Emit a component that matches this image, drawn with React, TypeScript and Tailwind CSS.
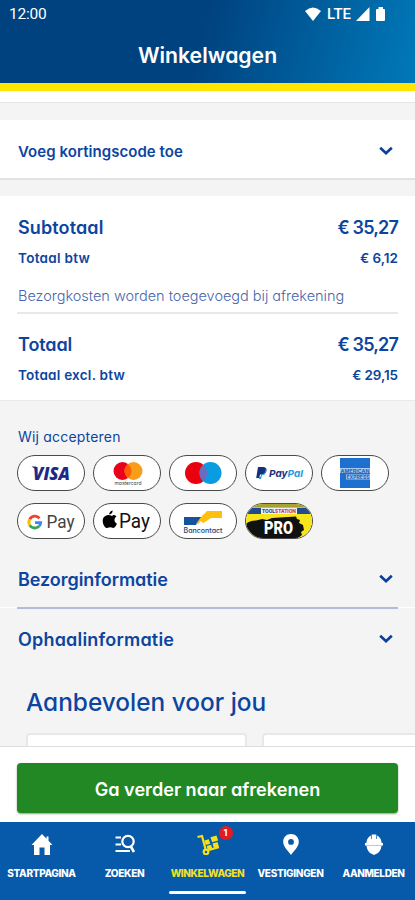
import React from "react";
import clsx from "clsx";

function Chevron() {
  return (
    <svg width="14" height="10" viewBox="0 0 14 10" fill="none" className="mr-[5px]">
      <path d="M1.200 1.800 L7 7.200 L12.800 1.800" stroke="#0a3f9c" strokeWidth="2.700" />
    </svg>
  );
}

// Rounded outline shared by all payment methods
function Pill({ children }: { children: React.ReactNode }) {
  return (
    <div className="h-9 w-[68px] overflow-hidden rounded-full border border-[#4a4a4a] bg-white">
      <svg width="66" height="34" viewBox="0 0 66 34">
        {children}
      </svg>
    </div>
  );
}

function Payments() {
  return (
    <div className="mt-[8px] grid grid-cols-[repeat(5,68px)] gap-x-2 gap-y-3">
      <Pill>
        <path d="M13.500 10.500h4.500l1.500 4z" fill="#1c2a66" />
        <text x="15" y="23.500" fontSize="18" fontWeight="800" fontStyle="italic" fontFamily="Open Sans" textLength="37" lengthAdjust="spacingAndGlyphs" fill="#1c2a86">VISA</text>
      </Pill>
      <Pill>
        <circle cx="28.500" cy="15" r="9" fill="#eb001b" />
        <circle cx="39.500" cy="15" r="9" fill="#f79e1b" />
        <path d="M34 7.900a9 9 0 0 1 0 14.200a9 9 0 0 1 0-14.200" fill="#ff5f00" />
        <text x="20.500" y="29" fontSize="5" fontFamily="Inter" textLength="27" lengthAdjust="spacingAndGlyphs" fill="#444">mastercard</text>
      </Pill>
      <Pill>
        <circle cx="26" cy="17" r="11" fill="#eb0010" />
        <circle cx="40.500" cy="17" r="11" fill="#0a9be0" />
        <path d="M33.200 8.700a11 11 0 0 1 0 16.600a11 11 0 0 1 0-16.600" fill="#6c6bbd" />
      </Pill>
      <Pill>
        <path d="M12 11h5.500q4 .5 2.800 4.500q-1 3-4.800 3h-1.500l-.8 3.500h-3z" fill="#14327c" />
        <path d="M19.500 13q1.300 1.200.5 3.500q-1 2.500-4 2.500l-1 4h-2.200l.4-2h1.200l.8-3h1.500q2.500-.5 2.800-5" fill="#1b9ad8" />
        <text x="23" y="20.500" fontSize="9.500" fontWeight="700" fontStyle="italic" fontFamily="Inter" textLength="34" lengthAdjust="spacingAndGlyphs" fill="#1d2f7c">
          Pay<tspan fill="#1d9cdd">Pal</tspan>
        </text>
      </Pill>
      <Pill>
        <rect x="18" y="2" width="30" height="30" fill="#1d70cf" />
        <rect x="18" y="12" width="30" height="5" fill="#a9cbef" />
        <rect x="24" y="18.500" width="24" height="5" fill="#a9cbef" />
        <text x="18.500" y="16.500" fontSize="5" fontWeight="700" fontFamily="Inter" textLength="29" lengthAdjust="spacingAndGlyphs" fill="#1d61b8">AMERICAN</text>
        <text x="24.500" y="23" fontSize="5" fontWeight="700" fontFamily="Inter" textLength="23" lengthAdjust="spacingAndGlyphs" fill="#1d61b8">EXPRESS</text>
      </Pill>
      <Pill>
        <g fill="none" strokeWidth="2.900">
          <path d="M21.500 14.200A6 6 0 0 0 11.700 15.200" stroke="#ea4335" />
          <path d="M11.700 15.200A6 6 0 0 0 11.700 21.200" stroke="#fbbc05" />
          <path d="M11.700 21.200A6 6 0 0 0 21 22.300" stroke="#34a853" />
          <path d="M21 22.300Q22.700 20.700 22.700 18.600H17" stroke="#4285f4" />
        </g>
        <text x="28.500" y="24" fontSize="19" fontFamily="Roboto" textLength="28" lengthAdjust="spacingAndGlyphs" fill="#444">Pay</text>
      </Pill>
      <Pill>
        <path d="M19 13.200q-3 -1.500-5.600-1q-4.600 1.300-4.200 6.400q.6 4.800 3.600 6.400q1.200.3 2.400-.4q1.500-.6 3 0q1.800.8 3-.3q1.500-1.500 2.200-3.600q-2.500-1.200-2.500-3.800q.1-2.200 2-3.500q-1.600-1.900-3.900-1.200z" transform="translate(-.5 -1)" fill="#000" />
        <path d="M15.200 10.500q0-3.200 3.400-4q.1 3.300-3.400 4" fill="#000" />
        <text x="25" y="24" fontSize="19.500" fontFamily="Roboto" textLength="31" lengthAdjust="spacingAndGlyphs" fill="#111">Pay</text>
      </Pill>
      <Pill>
        <path d="M14 13h18l-6 8H14z" fill="#15539e" />
        <path d="M31 13l6-6h15v7H41l-9 6h-6z" fill="#ffbf10" />
        <path d="M27 21l4-4l3 3z" fill="#fff" />
        <text x="13.500" y="29" fontSize="7" fontWeight="500" fontFamily="Inter" textLength="39" lengthAdjust="spacingAndGlyphs" fill="#24407c">Bancontact</text>
      </Pill>
      <Pill>
        <rect width="66" height="34" fill="#f7e51b" />
        <rect width="66" height="3.500" fill="#a8a232" />
        <rect y="4" width="66" height="6" fill="#204b91" />
        <rect x="15" y="4" width="36" height="6" fill="#eef1fa" />
        <text x="16" y="9" fontSize="5" fontWeight="800" fontFamily="Inter" textLength="34" lengthAdjust="spacingAndGlyphs" fill="#24408f">
          TOOL<tspan fill="#d8323e">STATION</tspan>
        </text>
        <path d="M0 20Q3 16.500 10 16.500L16 15L21 16L26 14L50 12.500L51 15L54 16L53 19L57 21L58 26L55 28L56 31L52 34H0z" fill="#111" />
        <text x="18" y="30" fontSize="18.500" fontWeight="900" fontFamily="Roboto" textLength="29" lengthAdjust="spacingAndGlyphs" fill="#fff">PRO</text>
      </Pill>
    </div>
  );
}

const tabs = [
  {
    label: "STARTPAGINA",
    spacing: "tracking-[-0.35px]",
    icon: <path d="M11 0L0.500 11H3V21H8.500V13.500H13.500V21H19V11H21.500L17.500 6.800V2.500H15.500V4.700z" fill="#fff" />,
  },
  {
    label: "ZOEKEN",
    spacing: "tracking-[-0.3px]",
    icon: (
      <g stroke="#fff" fill="none" strokeWidth="2">
        <path d="M1.500 3.500H7M1.500 10.500H7M1.500 17H16" />
        <circle cx="14" cy="7.500" r="5.700" strokeWidth="2.200" />
        <path d="M16.800 12.500L20 18" strokeWidth="2.600" />
      </g>
    ),
  },
  {
    label: "WINKELWAGEN",
    spacing: "tracking-[-0.4px]",
    active: true,
    icon: (
      <g fill="none" stroke="#f3e11b" strokeWidth="2.200">
        <path d="M0.500 3L5 2L8.500 15" />
        <path d="M12 16L22 13" />
        <circle cx="9" cy="18" r="2.300" />
        <path d="M7.300 6.500l4.500-1.300 1.500 4.500-4.500 1.400zM9.600 12l4.500-1.300 1.300 4-4.500 1.400zM13.500 3.200l6-1.700 1.600 5.100-6 1.700zM15.500 9.600l5-1.500 1.400 4.400-5 1.500z" fill="#f3e11b" stroke="none" />
      </g>
    ),
  },
  {
    label: "VESTIGINGEN",
    spacing: "tracking-[-0.3px]",
    icon: <path fillRule="evenodd" d="M11 0C6.500 0 3.200 3.300 3.200 7.700C3.200 13 8.500 17 11 21C13.500 17 18.800 13 18.800 7.700C18.800 3.300 15.500 0 11 0M11 5A2.900 2.900 0 1 1 11 10.800A2.900 2.900 0 1 1 11 5" fill="#fff" />,
  },
  {
    label: "AANMELDEN",
    spacing: "tracking-[-0.35px]",
    icon: (
      <>
        <path d="M8 1.500V5L8.700 5V.5H13.300V5L14 5V1.500Q18.300 3.500 18.700 9H20V11.500H18.500Q18 16.500 15 19L11 21L7 19Q4 16.500 3.500 11.500H2V9H3.300Q3.700 3.500 8 1.500" fill="#fff" />
        <path d="M3.500 11.500H18.500" stroke="#b5cbe6" strokeWidth="1" />
      </>
    ),
  },
];

function InfoRow({ title, className }: { title: string; className?: string }) {
  return (
    <div className="flex h-[58px] items-center justify-between px-[17px] pt-[2px]">
      <span className={clsx("pl-px text-[18px] font-semibold", className)}>{title}</span>
      <Chevron />
    </div>
  );
}

export default function App() {
  return (
    <div className="flex h-[900px] w-[415px] flex-col overflow-hidden bg-[#f4f4f4] font-[Inter,sans-serif] text-[#0c459f] whitespace-nowrap [font-feature-settings:'cv11']">
      {/* Status bar and title */}
      <header className="h-[91px] shrink-0 border-b-8 border-[#ffe500] bg-[linear-gradient(105deg,#00427f_0%,#00427f_48%,#0079b9_100%)] text-white">
        <div className="flex h-7 items-center justify-between pl-[9px] pr-[28px] font-[Roboto,sans-serif]">
          <span className="pt-px text-[15.5px] tracking-[-0.2px]">12:00</span>
          <div className="flex items-center">
            <svg width="16" height="14" viewBox="0 0 16 14">
              <path d="M0 4Q8-3 16 4L8 14z" fill="#fff" />
            </svg>
            <span className="ml-[6px] text-[15px] font-medium">LTE</span>
            <svg width="31" height="14" viewBox="0 0 31 14" className="ml-[5px]">
              <path d="M0 14L13.500 0V14z" fill="#fff" />
              <path d="M20 3Q20 2 21 2H22.500V0H27V2H28Q29 2 29 3V13Q29 14 28 14H21Q20 14 20 13z" fill="#fff" />
            </svg>
          </div>
        </div>
        <h1 className="mt-[11px] text-center text-[21.2px] leading-8 font-semibold">Winkelwagen</h1>
      </header>

      <div className="h-3 shrink-0 border-b border-[#e5e5e5] bg-white" />

      {/* Discount code */}
      <section className="mt-[17px] flex h-[60px] shrink-0 items-center justify-between border-b-2 border-[#e2e2e2] bg-white px-[17px]">
        <span className="mt-[6px] pl-px text-[15px] font-semibold tracking-[0.05px]">Voeg kortingscode toe</span>
        <div className="mt-[3px]">
          <Chevron />
        </div>
      </section>

      {/* Totals */}
      <section className="mt-4 h-[205px] shrink-0 border-b border-[#e9e9e9] bg-white px-[17px] pt-[17px]">
        <div className="flex h-7 items-center justify-between pl-px text-[18px] font-semibold">
          <span className="tracking-[0.12px]">Subtotaal</span>
          <span className="tracking-[-0.85px]">€ 35,27</span>
        </div>
        <div className="mt-[5px] flex h-6 items-center justify-between pl-px text-[13.5px] font-semibold">
          <span className="tracking-[0.28px]">Totaal btw</span>
          <span>€ 6,12</span>
        </div>
        <div className="mt-[15px] flex h-[29px] border-b-2 border-[#e8e8e8] pt-[1px] text-[14.5px] leading-5 font-light text-[#4866ad]">
          <span className="pl-px tracking-[-0.02px]">Bezorgkosten worden toegevoegd bij afrekening</span>
        </div>
        <div className="mt-[16px] flex h-7 items-center justify-between pl-px text-[18px] font-semibold">
          <span className="tracking-[-0.1px]">Totaal</span>
          <span className="tracking-[-0.85px]">€ 35,27</span>
        </div>
        <div className="mt-[5px] flex h-6 items-center justify-between pl-px text-[13.5px] font-semibold">
          <span className="tracking-[0.24px]">Totaal excl. btw</span>
          <span className="tracking-[-0.1px]">€ 29,15</span>
        </div>
      </section>

      <section className="shrink-0 px-[17px] pt-[26px]">
        <p className="pl-px text-[14px] leading-5 tracking-[0.2px]">Wij accepteren</p>
        <Payments />
      </section>

      <section className="mt-[10px] shrink-0">
        <InfoRow title="Bezorginformatie" className="tracking-[-0.06px]" />
        <div className="h-[2px] border-t border-white px-[17px]">
          <div className="-mt-px h-[2px] bg-[#b5b9dc]" />
        </div>
        <InfoRow title="Ophaalinformatie" className="tracking-[0.2px]" />
      </section>

      {/* Recommended products, cut off by the checkout bar */}
      <section className="h-[79px] shrink-0 overflow-hidden pl-[26px]">
        <h2 className="mt-[19px] text-[24.4px] leading-8 font-medium">Aanbevolen voor jou</h2>
        <div className="mt-[15px] flex gap-[15px]">
          <div className="h-20 w-[221px] shrink-0 rounded-sm border-2 border-[#e8e8e8] bg-white" />
          <div className="h-20 w-[221px] shrink-0 rounded-sm border-2 border-[#e8e8e8] bg-white" />
        </div>
      </section>

      <div className="h-[76px] shrink-0 border-t border-[#dedede] bg-white px-[17px] pt-4">
        <button className="h-[50px] w-full rounded-[4px] bg-[#228823] pt-[3px] text-[18.1px] font-semibold text-white shadow-[0_1px_2px_#88a488]">
          Ga verder naar afrekenen
        </button>
      </div>

      <nav className="flex grow flex-col bg-[#0759aa] text-white">
        <div className="grid grow grid-cols-5">
          {tabs.map((tab) => (
            <div key={tab.label} className="flex flex-col items-center pt-3">
              <div className="relative">
                <svg width="22" height="21" viewBox="0 0 22 21">
                  {tab.icon}
                </svg>
                {tab.active && (
                  <span className="absolute -top-[8px] left-[22px] flex h-[14px] w-[14px] items-center justify-center rounded-full bg-[#e51b24] text-[9px] font-bold">
                    1
                  </span>
                )}
              </div>
              <span className={clsx("mt-[10px] text-[10px] leading-[16px] font-extrabold", tab.spacing, tab.active && "text-[#efe02a]")}>
                {tab.label}
              </span>
            </div>
          ))}
        </div>
        <div className="mb-[6px] h-[3px] w-[77px] self-center rounded-full bg-white" />
      </nav>
    </div>
  );
}
